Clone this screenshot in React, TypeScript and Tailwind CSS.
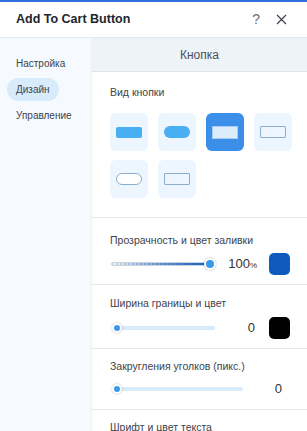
import React from "react";

const font = { fontFamily: '"Liberation Sans", Arial, sans-serif' };

function Tile({ children, selected }: { children: React.ReactNode; selected?: boolean }) {
  return (
    <div
      className={
        "w-[38px] h-[38px] rounded-[6px] flex items-center justify-center " +
        (selected ? "bg-[#3b8fe8]" : "bg-[#edf6ff]")
      }
    >
      {children}
    </div>
  );
}

export default function App() {
  return (
    <div style={font} className="w-[307px] h-[431px] overflow-hidden bg-white flex flex-col text-[#3d434b]">
      <div className="h-[2px] bg-[#2f6fe0]" />
      <div className="h-[36px] flex items-center px-4 border-b border-[#e3e8ee] shrink-0">
        <div className="text-[12.5px] font-bold text-[#20262e] flex-1">Add To Cart Button</div>
        <div className="text-[14px] text-[#6a6f76] mr-[16px]">?</div>
        <svg width="11" height="11" viewBox="0 0 11 11" className="mr-[4px]">
          <path d="M1 1L10 10M10 1L1 10" stroke="#3a3f45" strokeWidth="1.2" />
        </svg>
      </div>
      <div className="flex flex-1 min-h-0">
        <div className="w-[92px] bg-[#f6faff] pt-[12px] text-[10px] shrink-0 shadow-[inset_-1px_0_0_#eef2f6]">
          <div className="h-[26px] flex items-center pl-4">Настройка</div>
          <div className="h-[26px] flex items-center pl-[7px]">
            <div className="h-[23px] px-[9px] rounded-full bg-[#d8ebfb] flex items-center">Дизайн</div>
          </div>
          <div className="h-[26px] flex items-center pl-4">Управление</div>
        </div>
        <div className="flex-1 flex flex-col min-w-0">
          <div className="h-[34px] bg-[#eef3f7] border-b border-[#dfe5eb] flex items-center justify-center text-[12px] text-[#4a5058] shrink-0">
            Кнопка
          </div>
          <div className="pl-[18px] pt-[13px] pb-[19px] border-b border-[#e3e8ee]">
            <div className="text-[10.5px] leading-[14px]">Вид кнопки</div>
            <div className="mt-[14px] grid grid-cols-[repeat(4,38px)] gap-x-[10px] gap-y-[9px]">
              <Tile>
                <div className="w-[26px] h-[11px] rounded-[2px] bg-[#4aaef3]" />
              </Tile>
              <Tile>
                <div className="w-[26px] h-[12px] rounded-full bg-[#4aaef3]" />
              </Tile>
              <Tile selected>
                <div className="w-[26px] h-[13px] bg-[#dcecfb] border border-[#a9cdf2]" />
              </Tile>
              <Tile>
                <div className="w-[26px] h-[12px] rounded-[1px] border border-[#8aaecd]" />
              </Tile>
              <Tile>
                <div className="w-[26px] h-[12px] rounded-full border border-[#8aaecd] bg-white" />
              </Tile>
              <Tile>
                <div className="w-[26px] h-[12px] rounded-[1px] border border-[#8aaecd]" />
              </Tile>
            </div>
          </div>
          <div className="pl-[18px] pr-[17px] pt-[15px] pb-[8px] border-b border-[#e3e8ee]">
            <div className="text-[10.5px] leading-[14px]">Прозрачность и цвет заливки</div>
            <div className="mt-[5px] h-[24px] flex items-center">
              <div className="relative w-[100px] h-[4px] rounded-full ml-[1px] border border-[#c9d3de] bg-[linear-gradient(90deg,rgba(15,91,189,0)_0%,rgba(15,91,189,0.6)_50%,#0f5bbd_100%),repeating-linear-gradient(90deg,#d0d4d8_0px,#d0d4d8_2px,#ffffff_2px,#ffffff_4px)]">
                <div className="absolute right-[-6px] top-[-5px] w-[12px] h-[12px] rounded-full bg-[#3899ec] border-[2px] border-white shadow-[0_0_2px_rgba(0,0,0,0.35)]" />
              </div>
              <div className="flex-1" />
              <div className="text-[13px] text-[#333] flex items-baseline">
                100<span className="text-[8px]">%</span>
              </div>
              <div className="ml-[12px] w-[21px] h-[22px] rounded-[5px] bg-[#0f5bbd]" />
            </div>
          </div>
          <div className="pl-[18px] pr-[17px] pt-[11px] pb-[8px] border-b border-[#e3e8ee]">
            <div className="text-[10.5px] leading-[14px]">Ширина границы и цвет</div>
            <div className="mt-[6px] h-[24px] flex items-center">
              <div className="relative w-[100px] h-[4px] rounded-full ml-[5px] bg-[#d8ebfb]">
                <div className="absolute left-[-3px] top-[-3px] w-[10px] h-[10px] rounded-full bg-[#3899ec] border-[2px] border-white shadow-[0_0_2px_rgba(0,0,0,0.3)]" />
              </div>
              <div className="flex-1" />
              <div className="text-[13px] text-[#333] mr-[14px]">0</div>
              <div className="w-[21px] h-[22px] rounded-[5px] bg-black" />
            </div>
          </div>
          <div className="pl-[18px] pr-[17px] pt-[10px] pb-[10px] border-b border-[#e3e8ee]">
            <div className="text-[10.5px] leading-[14px]">Закругления уголков (пикс.)</div>
            <div className="mt-[6px] h-[20px] flex items-center">
              <div className="relative w-[128px] h-[4px] rounded-full ml-[5px] bg-[#d8ebfb]">
                <div className="absolute left-[-3px] top-[-3px] w-[10px] h-[10px] rounded-full bg-[#3899ec] border-[2px] border-white shadow-[0_0_2px_rgba(0,0,0,0.3)]" />
              </div>
              <div className="flex-1" />
              <div className="text-[13px] text-[#333] mr-[8px]">0</div>
            </div>
          </div>
          <div className="pl-[18px] pt-[10px]">
            <div className="text-[10.5px] leading-[14px]">Шрифт и цвет текста</div>
          </div>
        </div>
      </div>
    </div>
  );
}
